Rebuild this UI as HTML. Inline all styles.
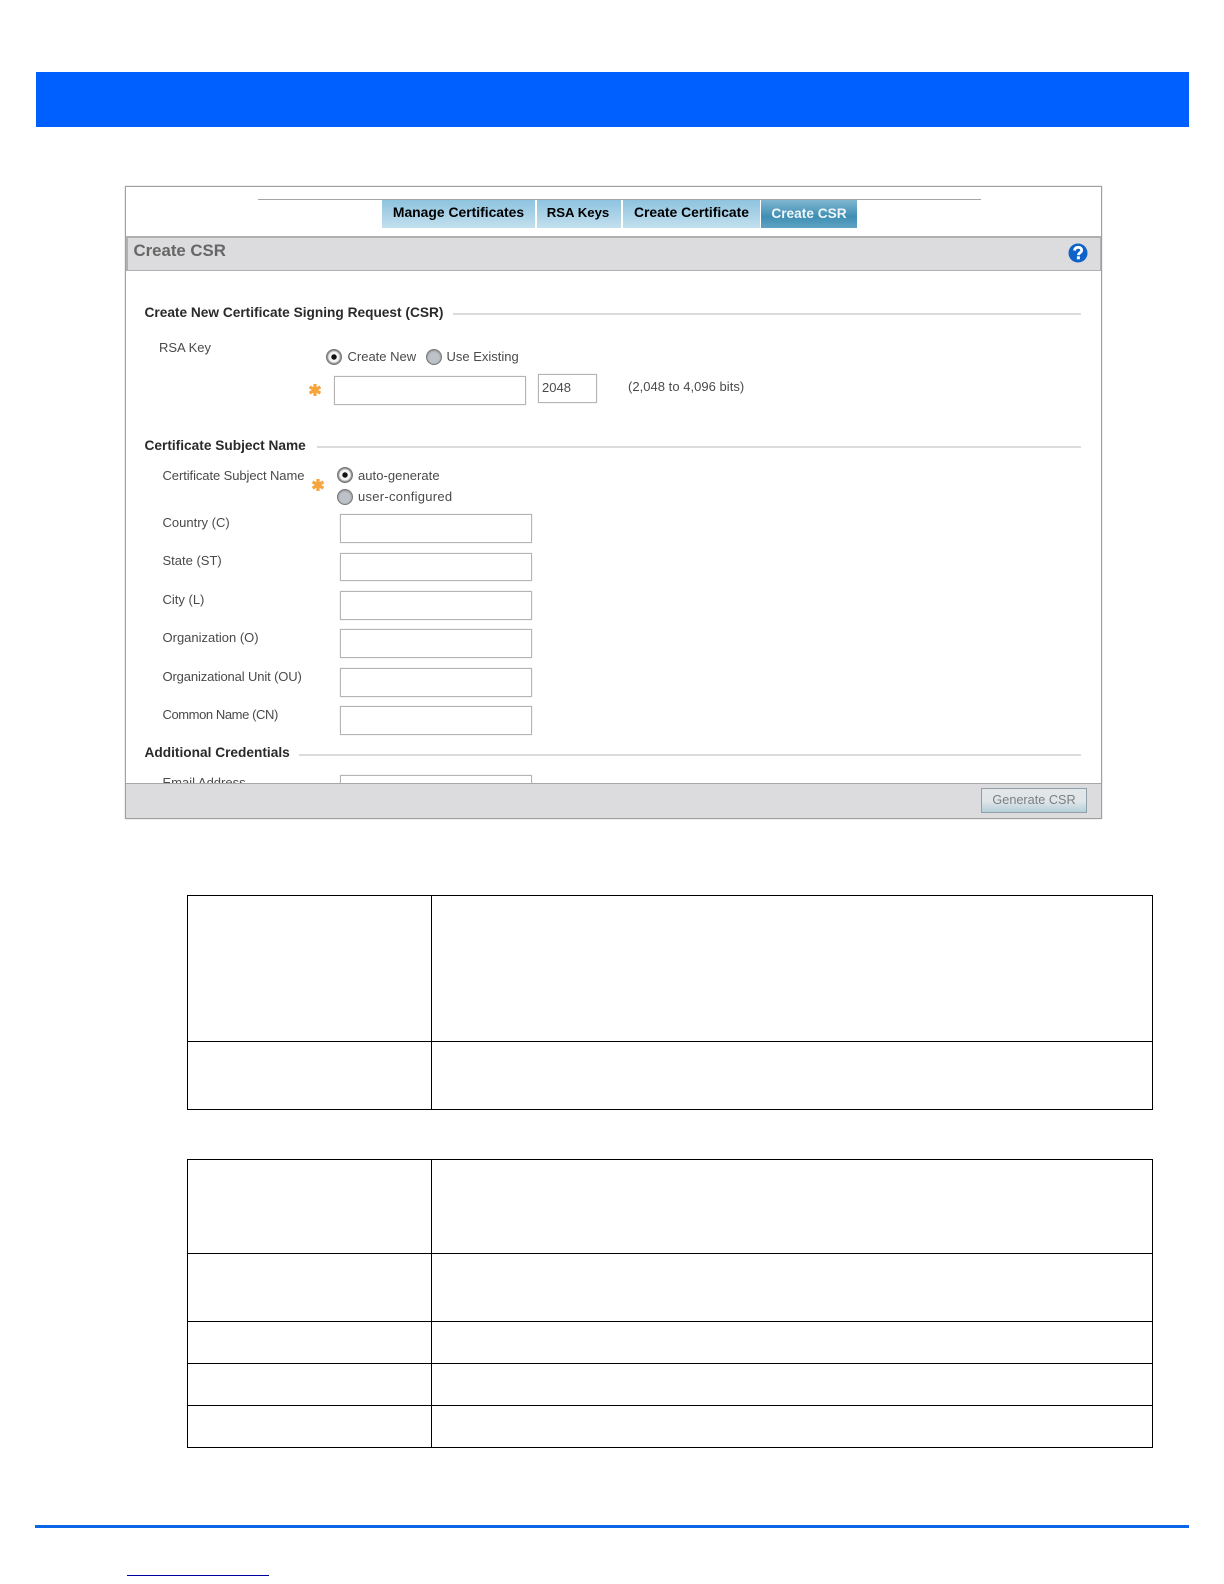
<!DOCTYPE html>
<html>
<head>
<meta charset="utf-8">
<style>
html,body{margin:0;padding:0;background:#fff}
body{position:relative;width:1224px;height:1584px;overflow:hidden;font-family:"Liberation Sans",Arial,sans-serif}
.a{position:absolute}
.t{position:absolute;white-space:nowrap;line-height:16px;font-size:13px;color:#4a4a4a;filter:blur(.25px)}
.h{position:absolute;white-space:nowrap;line-height:16px;font-size:13.7px;font-weight:bold;color:#2a2a2a;filter:blur(.25px)}
.l{position:absolute;height:2px;background:#dcdcdc}
.i{position:absolute;box-sizing:border-box;background:#fff;border:1px solid #b4b4b4;box-shadow:0 0 1px #ccc}
.tab{position:absolute;top:200px;height:28px;box-sizing:border-box;background:linear-gradient(#8ec3df,#c3e0ee);font-size:13.9px;font-weight:bold;color:#000;text-align:center;line-height:25px;white-space:nowrap}
.k{position:absolute;background:#000}
.r{position:absolute;width:16px;height:16px;box-sizing:border-box;border-radius:50%;border:1px solid #777;background:radial-gradient(circle at 50% 55%,#bcc2c8 0,#bcc2c8 50%,#9a9a9a 72%,#c8c8c8 100%)}
.r.on{background:radial-gradient(circle at 50% 50%,#111 0,#111 24%,#f4f4f4 30%,#f4f4f4 50%,#8a8a8a 68%,#bdbdbd 100%)}
</style>
</head>
<body>
<div class="a" style="left:36px;top:72px;width:1153px;height:55px;background:#0060ff"></div>

<!-- panel -->
<div class="a" style="left:125px;top:186px;width:977px;height:633px;box-sizing:border-box;border:1px solid #a0a0a0;box-shadow:0 0 1px #aaa;background:#fff;overflow:hidden"></div>
<div class="a" style="left:258px;top:199px;width:723px;height:1px;background:#a5a5a5"></div>
<div class="tab" style="left:382px;width:153px">Manage Certificates</div>
<div class="tab" style="left:537px;width:84px;padding-right:2px;font-size:13.2px">RSA Keys</div>
<div class="tab" style="left:623px;width:137px">Create Certificate</div>
<div class="tab" style="left:761px;width:96px;background:linear-gradient(#7fb5cf,#3f8fb3 60%,#5fa3c2);color:#eef6fa;line-height:27px;font-size:13.7px">Create CSR</div>

<div class="a" style="left:126px;top:236px;width:975px;height:35px;box-sizing:border-box;background:#dcdbdd;border:1px solid #b0b0b0;border-top:2px solid #b0b0b0;border-left:2px solid #b0b0b0"></div>
<div class="a" style="left:133.5px;top:241px;font-size:16.8px;line-height:20px;font-weight:bold;color:#666;white-space:nowrap">Create CSR</div>
<svg class="a" style="left:1068px;top:243px" width="20" height="20" viewBox="0 0 20 20">
<circle cx="10" cy="10" r="9.5" fill="#0f62c8"/>
<path d="M6.6 7.6C6.7 5.4 8.3 4.3 10.2 4.3C12.3 4.3 13.7 5.6 13.7 7.3C13.7 9.6 10.6 9.6 10.4 12.2" fill="none" stroke="#fff" stroke-width="2.8"/>
<rect x="8.9" y="13.3" width="3" height="3" fill="#fff"/>
</svg>

<div class="h" style="left:144.5px;top:305px">Create New Certificate Signing Request (CSR)</div>
<div class="l" style="left:453px;top:313px;width:628px"></div>
<div class="t" style="left:159px;top:339.5px">RSA Key</div>
<div class="r on" style="left:326px;top:348.5px"></div>
<div class="t" style="left:347.5px;top:349px">Create New</div>
<div class="r" style="left:426px;top:348.5px"></div>
<div class="t" style="left:446.5px;top:349px">Use Existing</div>
<svg class="a" style="left:308px;top:383px" width="14" height="14" viewBox="0 0 14 14"><path d="M7 1V13M1.6 3.9L12.4 10.1M12.4 3.9L1.6 10.1" stroke="#f6a43c" stroke-width="3.2"/></svg>
<div class="i" style="left:334px;top:376px;width:192px;height:28.5px"></div>
<div class="i" style="left:538px;top:374px;width:59px;height:29px"></div>
<div class="t" style="left:542px;top:380px">2048</div>
<div class="t" style="left:628px;top:379px;letter-spacing:.03px">(2,048 to 4,096 bits)</div>

<div class="h" style="left:144.5px;top:438px">Certificate Subject Name</div>
<div class="l" style="left:317px;top:446px;width:764px"></div>
<div class="t" style="left:162.5px;top:468px;letter-spacing:-.08px">Certificate Subject Name</div>
<svg class="a" style="left:311px;top:478px" width="14" height="14" viewBox="0 0 14 14"><path d="M7 1V13M1.6 3.9L12.4 10.1M12.4 3.9L1.6 10.1" stroke="#f6a43c" stroke-width="3.2"/></svg>
<div class="r on" style="left:337px;top:467px"></div>
<div class="t" style="left:358px;top:468px;letter-spacing:.05px">auto-generate</div>
<div class="r" style="left:337px;top:489px"></div>
<div class="t" style="left:358px;top:489px;letter-spacing:.27px">user-configured</div>

<div class="t" style="left:162.5px;top:515px">Country (C)</div>
<div class="i" style="left:340px;top:514px;width:192px;height:28.5px"></div>
<div class="t" style="left:162.5px;top:553px">State (ST)</div>
<div class="i" style="left:340px;top:552.5px;width:192px;height:28.5px"></div>
<div class="t" style="left:162.5px;top:592px">City (L)</div>
<div class="i" style="left:340px;top:591px;width:192px;height:28.5px"></div>
<div class="t" style="left:162.5px;top:630px">Organization (O)</div>
<div class="i" style="left:340px;top:629px;width:192px;height:28.5px"></div>
<div class="t" style="left:162.5px;top:668.5px;letter-spacing:-.13px">Organizational Unit (OU)</div>
<div class="i" style="left:340px;top:668px;width:192px;height:28.5px"></div>
<div class="t" style="left:162.5px;top:706.5px;letter-spacing:-.42px">Common Name (CN)</div>
<div class="i" style="left:340px;top:706px;width:192px;height:28.5px"></div>

<div class="h" style="left:144.5px;top:745px">Additional Credentials</div>
<div class="l" style="left:299px;top:754px;width:782px"></div>
<div class="t" style="left:162.5px;top:775px">Email Address</div>
<div class="i" style="left:340px;top:775px;width:192px;height:29px"></div>

<div class="a" style="left:126px;top:783px;width:975px;height:35px;box-sizing:border-box;background:#dcdbdd;border-top:1px solid #a8a8a8"></div>
<div class="a" style="left:981px;top:788px;width:106px;height:25px;box-sizing:border-box;border:1px solid #8fa0a8;background:linear-gradient(#e2e6e8 0,#dfe5e8 55%,#b4d0da 100%);font-size:12.7px;line-height:22px;text-align:center;color:#7a7f82;white-space:nowrap">Generate CSR</div>

<!-- table 1 -->
<div class="k" style="left:187px;top:895px;width:966px;height:1px"></div>
<div class="k" style="left:187px;top:1041px;width:966px;height:1px"></div>
<div class="k" style="left:187px;top:1109px;width:966px;height:1px"></div>
<div class="k" style="left:187px;top:895px;width:1px;height:215px"></div>
<div class="k" style="left:431px;top:895px;width:1px;height:215px"></div>
<div class="k" style="left:1152px;top:895px;width:1px;height:215px"></div>

<!-- table 2 -->
<div class="k" style="left:187px;top:1159px;width:966px;height:1px"></div>
<div class="k" style="left:187px;top:1253px;width:966px;height:1px"></div>
<div class="k" style="left:187px;top:1321px;width:966px;height:1px"></div>
<div class="k" style="left:187px;top:1363px;width:966px;height:1px"></div>
<div class="k" style="left:187px;top:1405px;width:966px;height:1px"></div>
<div class="k" style="left:187px;top:1447px;width:966px;height:1px"></div>
<div class="k" style="left:187px;top:1159px;width:1px;height:289px"></div>
<div class="k" style="left:431px;top:1159px;width:1px;height:289px"></div>
<div class="k" style="left:1152px;top:1159px;width:1px;height:289px"></div>

<div class="a" style="left:35px;top:1525px;width:1154px;height:3px;background:#0a66e6"></div>
<div class="a" style="left:127px;top:1575px;width:142px;height:1px;background:#0000a0"></div>
</body>
</html>
